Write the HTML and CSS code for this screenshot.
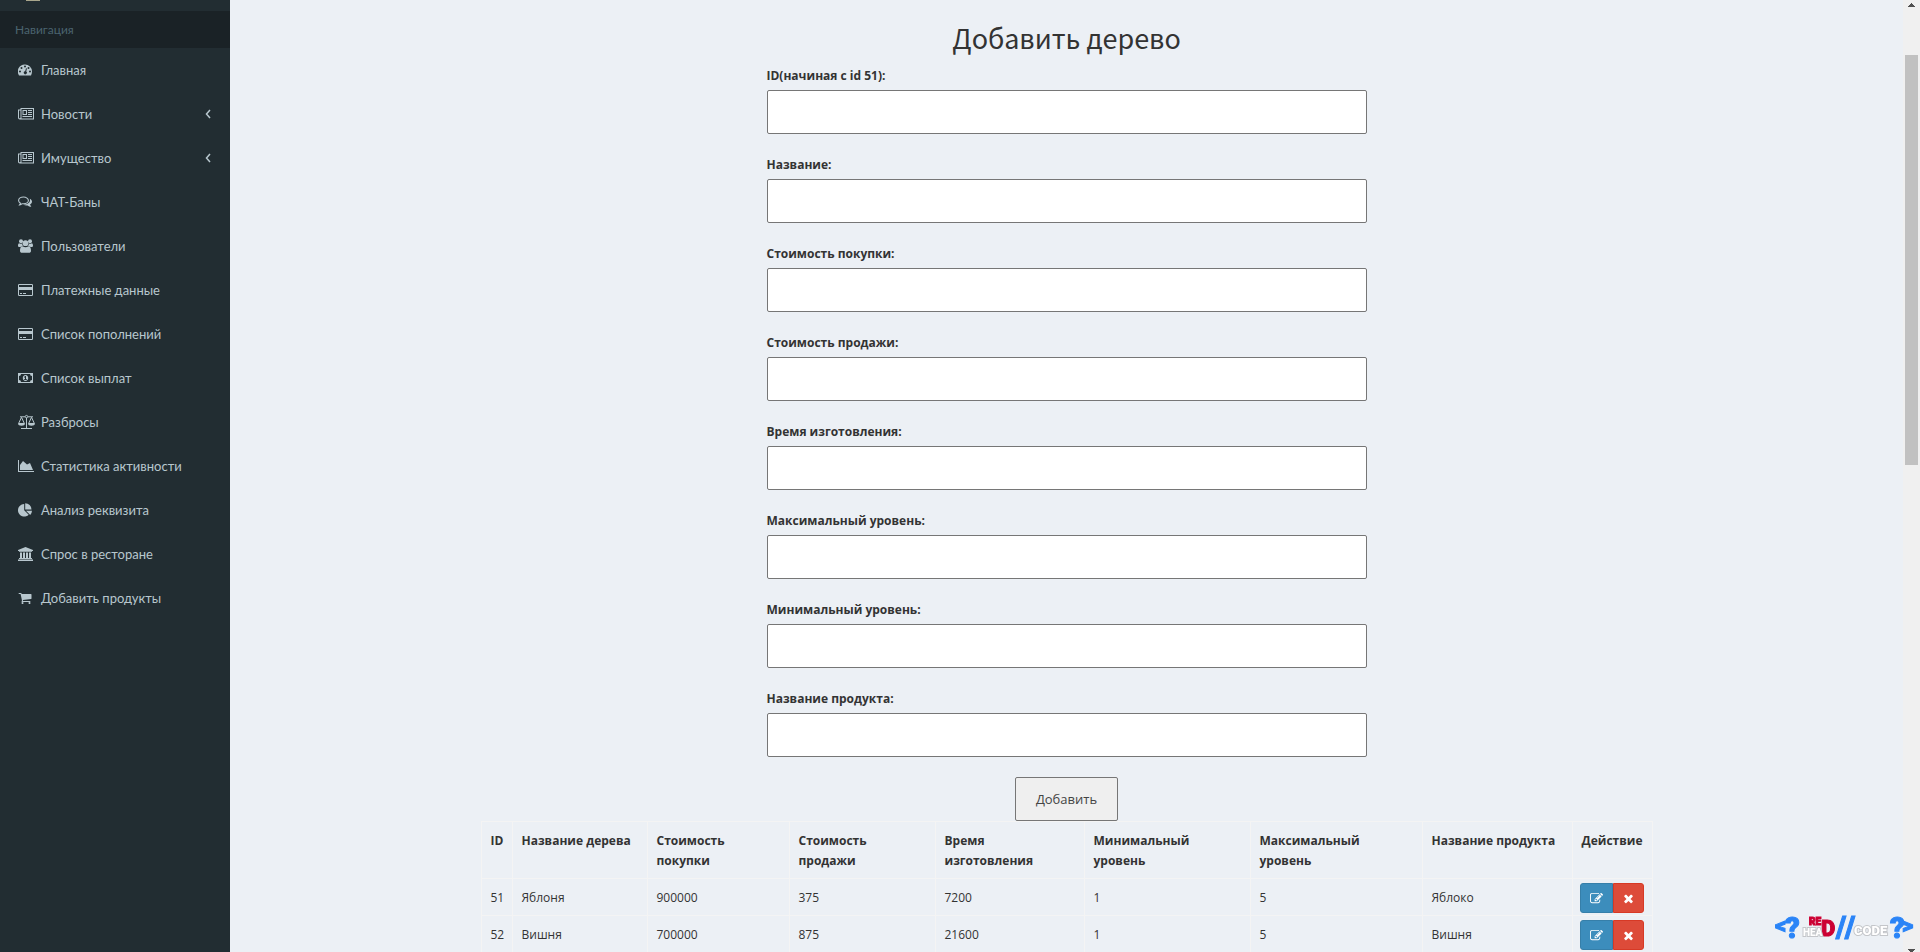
FILE: index.html
```html
<!DOCTYPE html>
<html lang="ru">
<head>
<meta charset="utf-8">
<title>Добавить дерево</title>
<link rel="stylesheet" href="styles.css">
</head>
<body>
<svg class="defs" aria-hidden="true">
  <symbol id="i-news" viewBox="0 0 18 16"><path fill-rule="evenodd" d="M2.500 2H16v11.500H1.800A1.800 1.800 0 0 1 0 11.700V3.500h2.500zM2.500 4.500H1v7.200a.8.8 0 0 0 1.500 0zM3.500 3v9.500H15V3zM4.500 4H9v5H4.500zM5.500 5v3H8V5zM10 4h4v1h-4zM10 6h4v1h-4zM10 8h4v1h-4zM4.500 10H14v1H4.500z"/></symbol>
  <symbol id="i-card" viewBox="0 0 18 16"><path fill-rule="evenodd" d="M1.200 2h12.600A1.200 1.200 0 0 1 15 3.200v9.600a1.200 1.200 0 0 1-1.200 1.200H1.200A1.200 1.200 0 0 1 0 12.800V3.200A1.200 1.200 0 0 1 1.200 2zM1 3v2h13V3zM1 8v5h13V8zM2 11h2v1H2zM5 11h3v1H5z"/></symbol>
  <symbol id="i-left" viewBox="0 0 6 10"><path d="M5 1 1.500 5 5 9" fill="none" stroke="currentColor" stroke-width="1.500"/></symbol>
  <symbol id="i-edit" viewBox="0 0 1792 1792"><path d="M888 1184l116-116-152-152-116 116v56h96v96h56zm440-720q-16-16-33 1l-350 350q-17 17-1 33t33-1l350-350q17-17 1-33zm80 594v190q0 119-84.500 203.500t-203.500 84.500h-832q-119 0-203.500-84.500t-84.500-203.500v-832q0-119 84.500-203.500t203.500-84.500h832q63 0 117 25 15 7 18 23 3 17-9 29l-49 49q-14 14-32 8-23-6-45-6h-832q-66 0-113 47t-47 113v832q0 66 47 113t113 47h832q66 0 113-47t47-113v-126q0-13 9-22l64-64q15-15 35-7t20 29zm-96-738l288 288-672 672h-288v-288zm444 132l-92 92-288-288 92-92q28-28 68-28t68 28l152 152q28 28 28 68t-28 68z"/></symbol>
  <symbol id="i-times" viewBox="0 0 1792 1792"><path d="M1490 1322q0 40-28 68l-136 136q-28 28-68 28t-68-28l-294-294-294 294q-28 28-68 28t-68-28l-136-136q-28-28-28-68t28-68l294-294-294-294q-28-28-28-68t28-68l136-136q28-28 68-28t68 28l294 294 294-294q28-28 68-28t68 28l136 136q28 28 28 68t-28 68l-294 294 294 294q28 28 28 68z"/></symbol>
</svg>
<div class="app">
  <aside class="sidebar">
    <div class="user"><span class="avatar"></span></div>
    <div class="nav-title">Навигация</div>
    <nav>
      <a href="#"><svg class="ico" viewBox="0 0 18 16"><path fill-rule="evenodd" d="M7 2.500a7 7 0 0 1 7 7c0 1.500-.4 2.800-1 3.900-.1.100-.2.200-.4.200H1.400c-.2 0-.3-.1-.4-.2A7 7 0 0 1 7 2.500zM2 8.500a1 1 0 1 0 0 2 1 1 0 0 0 0-2zM3.500 5a1 1 0 1 0 0 2 1 1 0 0 0 0-2zM7 3.500a1 1 0 1 0 0 2 1 1 0 0 0 0-2zM10.500 5a1 1 0 1 0 0 2 1 1 0 0 0 0-2zM12 8.500a1 1 0 1 0 0 2 1 1 0 0 0 0-2zM8 6.300l-.8 3a1.500 1.500 0 1 0 1 .3l.8-3z"/></svg>Главная</a>
      <a href="#"><svg class="ico"><use href="#i-news"/></svg>Новости<svg class="arrow"><use href="#i-left"/></svg></a>
      <a href="#"><svg class="ico"><use href="#i-news"/></svg>Имущество<svg class="arrow"><use href="#i-left"/></svg></a>
      <a href="#"><svg class="ico" viewBox="0 0 18 16"><path fill="none" stroke="currentColor" stroke-width="1.100" d="M5.500 3C2.800 3 .6 4.600.6 6.500c0 1.100.8 2.100 1.900 2.700-.2.700-.5 1.200-.9 1.700 1-.1 1.900-.6 2.600-1.200l1.300.1c2.700 0 4.900-1.500 4.900-3.300S8.200 3 5.500 3z"/><path d="M11.800 4.800c1.400.7 2.200 1.700 2.200 2.900 0 1.100-.8 2.100-2 2.800.2.700.7 1.200 1.200 1.800.2.200 0 .5-.3.500-1.300-.2-2.400-.7-3.200-1.400-1.700.2-3.200-.1-4.400-.8 4 0 6.700-2 6.700-4.400 0-.5 0-1-.2-1.400z"/></svg>ЧАТ-Баны</a>
      <a href="#"><svg class="ico" viewBox="0 0 18 16"><circle cx="3" cy="3.200" r="2"/><circle cx="12" cy="3.200" r="2"/><circle cx="7.500" cy="5.200" r="2.900"/><path d="M1.300 5.300c1 .7 2.200.6 2.800.2 0 1.100.3 1.900.9 2.500-1.200 0-1.900.3-2.400 1H1.500C.6 9 0 8.600 0 7.800c0-1 .2-2.500 1.300-2.500zM13.700 5.300c-1 .7-2.200.6-2.800.2 0 1.100-.3 1.900-.9 2.500 1.200 0 1.900.3 2.400 1h1.100c.9 0 1.500-.4 1.500-1.200 0-1-.2-2.500-1.300-2.500zM4.600 8.200c1.800 1.400 4 1.400 5.800 0 1.900 0 2.600 1.900 2.600 4.500 0 1.400-.8 2.100-2 2.100H4c-1.200 0-2-.7-2-2.100 0-2.600.7-4.500 2.600-4.500z"/></svg>Пользователи</a>
      <a href="#"><svg class="ico"><use href="#i-card"/></svg>Платежные данные</a>
      <a href="#"><svg class="ico"><use href="#i-card"/></svg>Список пополнений</a>
      <a href="#"><svg class="ico" viewBox="0 0 18 16"><path fill-rule="evenodd" d="M0 3h15v10H0zM3 4a2 2 0 0 1-2 2v4a2 2 0 0 1 2 2h9a2 2 0 0 1 2-2V6a2 2 0 0 1-2-2zM7.500 5c1.700 0 2.700 1.400 2.700 3s-1 3-2.700 3-2.700-1.400-2.700-3 1-3 2.700-3zM7.200 6 6 7v.6h1v1.700H6v.8h3v-.8H8V6z"/></svg>Список выплат</a>
      <a href="#"><svg class="ico" viewBox="0 0 18 16"><path fill="none" stroke="currentColor" stroke-linejoin="round" d="M2 2.800h5M10 2.800h5M8.500 3.800v10.700M3 14.500h11M3.500 3.300.6 9.500h5.800L3.500 3.300zM13.500 3.300l-2.900 6.200h5.800l-2.900-6.200z"/><circle cx="8.500" cy="2.600" r="1.200" fill="none" stroke="currentColor"/><path d="M0 9.500h7c0 1.600-1.600 2.200-3.500 2.200S0 11.100 0 9.500zM10 9.500h7c0 1.600-1.600 2.200-3.500 2.200S10 11.100 10 9.500z"/></svg>Разбросы</a>
      <a href="#"><svg class="ico" viewBox="0 0 18 16"><path d="M0 2h1v11h15v1H0zM2 12V7l3-4 4 3.500L12 5l3 7z"/></svg>Статистика активности</a>
      <a href="#"><svg class="ico" viewBox="0 0 18 16"><path d="M6.200 2v6.300l4.500 4.500A6.300 6.300 0 1 1 6.200 2zM8 8.700h6a6.200 6.200 0 0 1-1.800 4.200zM7.200 1.200a6.300 6.300 0 0 1 6.300 6.300H7.200z"/></svg>Анализ реквизита</a>
      <a href="#"><svg class="ico" viewBox="0 0 18 16"><path d="M7.500 1 15 4v1h-1v.8H1V5H0V4zM2 6.500h2v5.500h1V6.500h2v5.500h1V6.500h2v5.500h1V6.500h2v5.500h1v1H1v-1h1zM0 13.500h15V15H0z"/></svg>Спрос в ресторане</a>
      <a href="#"><svg class="ico cart" viewBox="0 0 1792 1792"><path d="M704 1536q0 52-38 90t-90 38-90-38-38-90 38-90 90-38 90 38 38 90zm896 0q0 52-38 90t-90 38-90-38-38-90 38-90 90-38 90 38 38 90zm128-1088v512q0 24-16.500 42.500t-40.500 21.500l-1044 122q13 60 13 70 0 16-24 64h920q26 0 45 19t19 45-19 45-45 19h-1024q-26 0-45-19t-19-45q0-11 8-31.500t16-36 21.500-40 15.500-29.500l-177-823h-204q-26 0-45-19t-19-45 19-45 45-19h256q16 0 28.500 6.500t19.500 15.500 13 24.500 8 26 5.500 29.500 4.500 26h1201q26 0 45 19t19 45z"/></svg>Добавить продукты</a>
    </nav>
  </aside>
  <main class="content">
    <h1>Добавить дерево</h1>
    <form class="form">
      <div class="field"><label for="f1">ID(начиная с id 51):</label><input id="f1" type="text"></div>
      <div class="field"><label for="f2">Название:</label><input id="f2" type="text"></div>
      <div class="field"><label for="f3">Стоимость покупки:</label><input id="f3" type="text"></div>
      <div class="field"><label for="f4">Стоимость продажи:</label><input id="f4" type="text"></div>
      <div class="field"><label for="f5">Время изготовления:</label><input id="f5" type="text"></div>
      <div class="field"><label for="f6">Максимальный уровень:</label><input id="f6" type="text"></div>
      <div class="field"><label for="f7">Минимальный уровень:</label><input id="f7" type="text"></div>
      <div class="field"><label for="f8">Название продукта:</label><input id="f8" type="text"></div>
      <button class="submit" type="submit">Добавить</button>
    </form>
    <table class="trees">
      <colgroup><col class="c-id"><col class="c-name"><col class="c-buy"><col class="c-sell"><col class="c-time"><col class="c-min"><col class="c-max"><col class="c-product"><col class="c-action"></colgroup>
      <thead>
        <tr><th>ID</th><th>Название дерева</th><th>Стоимость<br>покупки</th><th>Стоимость<br>продажи</th><th>Время<br>изготовления</th><th>Минимальный<br>уровень</th><th>Максимальный<br>уровень</th><th>Название продукта</th><th>Действие</th></tr>
      </thead>
      <tbody>
        <tr><td>51</td><td>Яблоня</td><td>900000</td><td>375</td><td>7200</td><td>1</td><td>5</td><td>Яблоко</td><td class="actions"><div class="group"><button class="edit" type="button" aria-label="Изменить"><svg><use href="#i-edit"/></svg></button><button class="del" type="button" aria-label="Удалить"><svg><use href="#i-times"/></svg></button></div></td></tr>
        <tr><td>52</td><td>Вишня</td><td>700000</td><td>875</td><td>21600</td><td>1</td><td>5</td><td>Вишня</td><td class="actions"><div class="group"><button class="edit" type="button" aria-label="Изменить"><svg><use href="#i-edit"/></svg></button><button class="del" type="button" aria-label="Удалить"><svg><use href="#i-times"/></svg></button></div></td></tr>
      </tbody>
    </table>
  </main>
  <div class="scroll" aria-hidden="true">
    <svg viewBox="0 0 7 4"><path d="M3 0h1v1h1v1h1v1h1v1H0V3h1V2h1V1h1z"/></svg>
    <div class="track"><div class="thumb"></div></div>
    <svg viewBox="0 0 7 4"><path d="M0 0h7v1H6v1H5v1H4v1H3V3H2V2H1V1H0z"/></svg>
  </div>
</div>
<svg class="brand" viewBox="0 0 142 34">
  <g class="blue"><text x="2" y="23" font-size="22">&lt;</text><text x="12" y="28" font-size="29">?</text><text x="63" y="27" font-size="29">/</text><text x="72" y="27" font-size="29">/</text><text x="117" y="28" font-size="29">?</text><text x="129" y="23" font-size="22">&gt;</text></g>
  <g class="red"><text x="36" y="15" font-size="10">RE</text><text x="48" y="26" font-size="22">D</text></g>
  <g class="white"><text x="30" y="26" font-size="10">HEA</text><text x="81" y="25" font-size="13">CODE</text></g>
</svg>
</body>
</html>
```
FILE: styles.css
```css
* { box-sizing: border-box; }
body {
  margin: 0;
  font-family: "Open Sans", sans-serif;
  font-size: 12px;
  line-height: 20px;
  color: #333;
  background: #ecf0f5;
}
svg { fill: currentColor; flex: none; }
.defs { display: none; }
.app { display: flex; min-height: 100vh; }

.sidebar { width: 230px; flex: none; background: #222d32; }
.user { height: 11px; padding-left: 10px; overflow: hidden; display: flex; align-items: flex-start; }
.avatar { width: 14px; height: 1px; margin-left: 16px; background: #a9a68c; }
.nav-title {
  padding: 9px 15px 8px;
  height: 37px;
  font-family: Lato, sans-serif;
  color: #4b646f;
  background: #1a2226;
}
.sidebar a {
  display: flex;
  align-items: center;
  gap: 5px;
  height: 44px;
  padding: 0 19px 0 18px;
  font-family: Lato, sans-serif;
  font-size: 13px;
  color: #b8c7ce;
  text-decoration: none;
}
.ico { width: 18px; height: 16px; }
.ico.cart { width: 14px; height: 14px; margin-right: 4px; }
.arrow { width: 6px; height: 10px; margin-left: auto; }

.content { flex: 1; min-width: 0; padding-top: 21px; }
h1 {
  margin: 0 0 12px;
  font-family: "Noto Sans CJK JP", sans-serif;
  font-size: 27px;
  font-weight: 400;
  line-height: 33px;
  text-align: center;
}
.form {
  display: flex;
  flex-direction: column;
  gap: 21px;
  max-width: 600px;
  margin: 0 auto;
}
.field { display: flex; flex-direction: column; gap: 4px; }
.field label { font-weight: 700; }
.field input {
  height: 44px;
  padding: 10px 20px;
  font: inherit;
  background: #fff;
  border: 1px solid #767676;
  border-radius: 2px;
}
.submit {
  align-self: center;
  height: 44px;
  margin-top: -1px;
  padding: 0 20px;
  font: inherit;
  font-size: 13px;
  color: #444;
  background: #efefef;
  border: 1px solid #767676;
  border-radius: 2px;
}

.trees {
  width: 100%;
  max-width: 1171px;
  margin: 0 auto;
  border-collapse: collapse;
  table-layout: fixed;
}
.trees th, .trees td {
  padding: 9px 8px 7px 9px;
  border: 1px solid #f4f4f4;
  text-align: left;
  vertical-align: top;
  white-space: nowrap;
}
.c-id { width: 31px; }
.c-name { width: 135px; }
.c-buy { width: 142px; }
.c-sell { width: 146px; }
.c-time { width: 149px; }
.c-min { width: 166px; }
.c-max { width: 172px; }
.c-product { width: 150px; }
.c-action { width: 80px; }
.trees .actions { padding: 4px 7px 2px; }
.group { display: flex; }
.group button {
  display: flex;
  align-items: center;
  justify-content: center;
  height: 30px;
  padding: 0;
  color: #fff;
}
.group .edit {
  width: 33px;
  background: #3c8dbc;
  border: 1px solid #367fa9;
  border-radius: 3px 0 0 3px;
}
.group .del {
  width: 31px;
  background: #dd4b39;
  border: 1px solid #d73925;
  border-radius: 0 3px 3px 0;
}
.group svg { width: 13px; height: 13px; }

.scroll {
  display: flex;
  flex-direction: column;
  align-items: center;
  gap: 10px;
  width: 17px;
  flex: none;
  padding-top: 3px;
  color: #505050;
  background: #f0f0f0;
}
.scroll svg { width: 7px; height: 4px; }
.track { flex: 1; padding-top: 38px; }
.thumb { width: 13px; height: 410px; background: #c1c1c1; }

.brand {
  position: fixed;
  right: 5px;
  bottom: 8px;
  width: 142px;
  height: 34px;
  overflow: visible;
  font-family: Roboto, sans-serif;
  font-weight: 900;
  stroke-width: 1px;
}
.blue { fill: #2a84f7; stroke: #2a84f7; }
.red { fill: #cc0033; stroke: #cc0033; }
.white { fill: #fff; stroke: #c4c6ca; paint-order: stroke; stroke-width: 2px; }
```
